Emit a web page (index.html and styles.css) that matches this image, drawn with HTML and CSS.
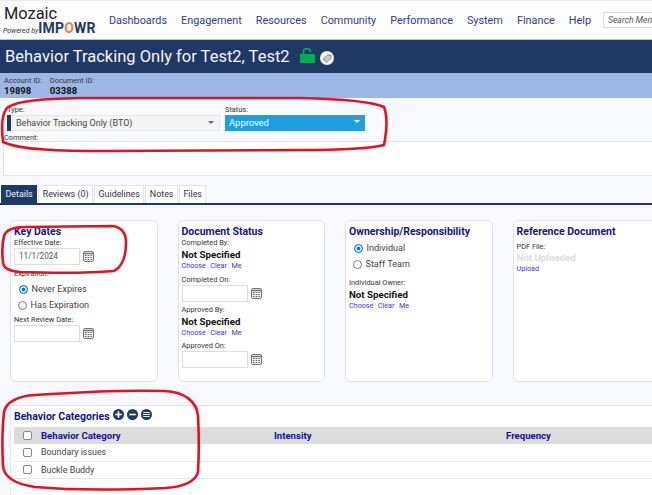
FILE: index.html

```html
<!DOCTYPE html>
<html lang="en">
<head>
  <meta charset="UTF-8">
  <meta name="viewport" content="width=device-width, initial-scale=1.0">
  <title>Behavior Tracking Only</title>
  <link rel="stylesheet" href="styles.css">
</head>
<body>
  <div class="page">
    <!-- Top nav -->
    <div class="topbar">
      <div class="logo">
        <div class="logo-name">Mozaic</div>
        <div class="logo-sub"><span class="powered">Powered by</span><span class="impowr">IMP<span class="impowr-o">O</span>WR</span></div>
      </div>
      <div class="nav">
        <a>Dashboards</a>
        <a>Engagement</a>
        <a>Resources</a>
        <a>Community</a>
        <a>Performance</a>
        <a>System</a>
        <a>Finance</a>
        <a>Help</a>
      </div>
      <div class="search">Search Men</div>
    </div>

    <!-- Title -->
    <div class="titlebar">
      <span class="title">Behavior Tracking Only for Test2, Test2</span>
      <svg class="lock" width="15" height="15" viewBox="0 0 15 15">
        <path d="M3.5 7V3.2a3.2 2.4 0 0 1 7 0V4.2" fill="none" stroke="#00b050" stroke-width="1.7"/>
        <rect x="0" y="6" width="15" height="9" fill="#00b050"/>
      </svg>
      <svg class="tag" width="14" height="14" viewBox="0 0 14 14">
        <circle cx="7" cy="7" r="7" fill="#f4f4f4"/>
        <path d="M3 8.2l4.4-4.2h3.6v3l-4.4 4.2z" fill="#c9ccd2" stroke="#6d7688" stroke-width="0.8"/>
      </svg>
    </div>

    <div class="idbar">
      <div class="id-item"><div class="id-label">Account ID:</div><div class="id-value">19898</div></div>
      <div class="id-item"><div class="id-label">Document ID:</div><div class="id-value">03388</div></div>
    </div>

    <!-- Type / status / comment -->
    <div class="typepanel">
      <div class="type-row">
        <div class="type-col">
          <div class="small-label">Type:</div>
          <div class="type-select"><span class="type-mark"></span><span class="type-box">Behavior Tracking Only (BTO)<i class="caret"></i></span></div>
        </div>
        <div class="status-col">
          <div class="small-label">Status:</div>
          <div class="status-select">Approved<i class="caret caret-white"></i></div>
        </div>
      </div>
      <div class="small-label comment-label">Comment:</div>
      <div class="comment-box"></div>
    </div>

    <!-- Tabs -->
    <div class="tabs">
      <div class="tab active">Details</div>
      <div class="tab">Reviews (0)</div>
      <div class="tab">Guidelines</div>
      <div class="tab">Notes</div>
      <div class="tab">Files</div>
    </div>

    <!-- Cards -->
    <div class="cards">
      <div class="card">
        <div class="card-title">Key Dates</div>
        <div class="small-label">Effective Date:</div>
        <div class="date-row">
          <div class="date-input">11/1/2024</div>
          <svg class="cal" width="11" height="11" viewBox="0 0 11 11"><use href="#cal-icon"/></svg>
        </div>
        <div class="small-label mt-4">Expiration:</div>
        <div class="radio-line first"><span class="radio on"></span>Never Expires</div>
        <div class="radio-line second"><span class="radio"></span>Has Expiration</div>
        <div class="small-label mt-2">Next Review Date:</div>
        <div class="date-row">
          <div class="date-input"></div>
          <svg class="cal" width="11" height="11" viewBox="0 0 11 11"><use href="#cal-icon"/></svg>
        </div>
      </div>

      <div class="card">
        <div class="card-title">Document Status</div>
        <div class="small-label">Completed By:</div>
        <div class="strong-value">Not Specified</div>
        <div class="links"><a>Choose</a><a>Clear</a><a>Me</a></div>
        <div class="small-label mt-4">Completed On:</div>
        <div class="date-row">
          <div class="date-input"></div>
          <svg class="cal" width="11" height="11" viewBox="0 0 11 11"><use href="#cal-icon"/></svg>
        </div>
        <div class="small-label mt-3">Approved By:</div>
        <div class="strong-value">Not Specified</div>
        <div class="links"><a>Choose</a><a>Clear</a><a>Me</a></div>
        <div class="small-label mt-3">Approved On:</div>
        <div class="date-row">
          <div class="date-input"></div>
          <svg class="cal" width="11" height="11" viewBox="0 0 11 11"><use href="#cal-icon"/></svg>
        </div>
      </div>

      <div class="card">
        <div class="card-title">Ownership/Responsibility</div>
        <div class="radio-line first mt-2"><span class="radio on"></span>Individual</div>
        <div class="radio-line second"><span class="radio"></span>Staff Team</div>
        <div class="small-label mt-6">Individual Owner:</div>
        <div class="strong-value">Not Specified</div>
        <div class="links"><a>Choose</a><a>Clear</a><a>Me</a></div>
      </div>

      <div class="card card-last">
        <div class="card-title">Reference Document</div>
        <div class="small-label mt-4">PDF File:</div>
        <div class="strong-value muted">Not Uploaded</div>
        <div class="links"><a>Upload</a></div>
      </div>
    </div>

    <!-- Categories -->
    <div class="categories">
      <div class="cat-head">
        <span class="cat-title">Behavior Categories</span>
        <svg width="11" height="11" viewBox="0 0 12 12"><circle cx="6" cy="6" r="6" fill="#1f3864"/><path d="M6 2.5v7M2.5 6h7" stroke="#fff" stroke-width="1.8"/></svg>
        <svg width="11" height="11" viewBox="0 0 12 12"><circle cx="6" cy="6" r="6" fill="#1f3864"/><path d="M2.5 6h7" stroke="#fff" stroke-width="1.8"/></svg>
        <svg width="11" height="11" viewBox="0 0 12 12"><circle cx="6" cy="6" r="6" fill="#1f3864"/><path d="M2.5 3.8h7M2 6h8M2.5 8.2h7" stroke="#fff" stroke-width="1"/></svg>
      </div>
      <div class="cat-row cat-header">
        <div class="col-name"><span class="check"></span><span>Behavior Category</span></div>
        <div class="col-intensity">Intensity</div>
        <div class="col-frequency">Frequency</div>
      </div>
      <div class="cat-row"><div class="col-name"><span class="check"></span>Boundary issues</div></div>
      <div class="cat-row"><div class="col-name"><span class="check"></span>Buckle Buddy</div></div>
    </div>
  </div>

  <!-- Calendar icon, reused -->
  <svg class="defs" width="0" height="0">
    <symbol id="cal-icon" viewBox="0 0 11 11">
      <rect x="0.5" y="0.5" width="10" height="10" rx="1.5" fill="#eee" stroke="#777"/>
      <path d="M0.5 2.5h10" stroke="#777" stroke-width="1.4"/>
      <path d="M2 4.5h1.5M4.7 4.5h1.5M7.4 4.5h1.5M2 6.5h1.5M4.7 6.5h1.5M7.4 6.5h1.5M2 8.5h1.5M4.7 8.5h1.5M7.4 8.5h1.5" stroke="#666" stroke-width="1"/>
    </symbol>
  </svg>

  <!-- Hand-drawn red rings on top of the screenshot -->
  <svg class="rings" width="652" height="495" viewBox="0 0 652 495">
    <path d="M3 142C1 125 2 112 8 107C20 100 45 99 80 98L300 98C340 99 372 101 384 107C387 115 387 130 384 145C372 148 340 150 300 150L110 151C60 151 20 150 3 142Z"/>
    <path d="M4 236C6 230 12 227 25 227L112 226C122 227 126 233 126 243C126 256 122 267 114 271C90 273 50 273 20 272C8 271 3 267 3 262C2 254 2 244 4 236Z"/>
    <path d="M4 412C6 402 18 396 35 395C80 392 130 390 165 391C185 392 197 402 198 416C199 435 199 455 198 472C195 483 180 487 165 488C120 490 70 490 35 487C15 484 4 477 3 466C2 448 2 430 4 412Z"/>
  </svg>
</body>
</html>
```

FILE: styles.css

```css
* {
  box-sizing: border-box;
}

html, body {
  margin: 0;
  padding: 0;
  height: 495px;
  overflow: hidden;
}

body {
  font-family: Roboto, "Liberation Sans", sans-serif;
  color: #333;
  background: #f8f9fe;
}

.page {
  width: 652px;
  height: 495px;
  overflow: hidden;
}

/* top nav */
.topbar {
  height: 40px;
  background: #fdfdfe;
  border-top: 1px solid #ececec;
  border-bottom: 1px solid #b9c2d2;
  display: flex;
  align-items: center;
  padding-left: 3px;
  white-space: nowrap;
}

.logo {
  width: 106px;
  flex: none;
}

.logo-name {
  font-size: 16.4px;
  line-height: 15px;
  padding-left: 1px;
  margin-top: 1px;
  color: #222;
}

.logo-sub {
  display: flex;
  align-items: baseline;
  line-height: 14px;
  height: 14px;
}

.powered {
  font-size: 7px;
  font-style: italic;
  color: #333;
}

.impowr {
  font-size: 14px;
  font-weight: 700;
  color: #1f3864;
  letter-spacing: 0.2px;
}

.impowr-o {
  color: #ef7d4f;
}

.nav {
  display: flex;
  gap: 14px;
  font-size: 10.85px;
  color: #2f3c8c;
  width: 494px;
  flex: none;
}

.search {
  width: 52px;
  height: 16px;
  flex: none;
  border: 1px solid #ddd;
  border-right: 0;
  background: #fff;
  font-size: 8.6px;
  font-style: italic;
  line-height: 15px;
  padding-left: 4px;
  color: #555;
  overflow: hidden;
}

/* title */
.titlebar {
  height: 33px;
  background: #1f3864;
  display: flex;
  align-items: center;
  padding-left: 5px;
  white-space: nowrap;
}

.title {
  font-size: 16.5px;
  color: #f4f6fa;
  width: 295px;
  flex: none;
}

.lock {
  margin-top: -3px;
  margin-right: 5px;
}

.tag {
  margin-top: 3px;
}

.idbar {
  height: 25px;
  background: #9db8e6;
  display: flex;
  gap: 8px;
  padding: 3px 0 0 4px;
}

.id-label {
  font-size: 7.4px;
  line-height: 9px;
  color: #333;
}

.id-value {
  font-size: 9.5px;
  line-height: 11px;
  font-weight: 700;
  color: #111;
}

/* type panel */
.typepanel {
  height: 87px;
  padding: 7px 0 0 3px;
}

.small-label {
  font-size: 7.4px;
  line-height: 10px;
  color: #333;
}

.type-row {
  display: flex;
  height: 26px;
}

.type-col {
  width: 222px;
  padding-left: 4px;
}

.type-select {
  display: flex;
  height: 16px;
}

.type-mark {
  width: 4px;
  background: #1f3864;
  margin-right: 1px;
}

.type-box {
  width: 208px;
  background: #f5f5f5;
  border: 1px solid #e6e6e6;
  font-size: 9px;
  line-height: 14px;
  padding-left: 3px;
  color: #444;
  position: relative;
}

.caret {
  position: absolute;
  right: 5px;
  top: 5px;
  border-left: 3px solid transparent;
  border-right: 3px solid transparent;
  border-top: 3px solid #666;
}

.caret-white {
  border-top-color: #fff;
}

.status-select {
  width: 140px;
  height: 16px;
  background: #1f9fdb;
  color: #fff;
  font-size: 9.4px;
  line-height: 16px;
  padding-left: 4px;
  position: relative;
}

.comment-label {
  margin-top: 2px;
  padding-left: 1px;
  height: 9px;
  line-height: 9px;
}

.comment-box {
  height: 35px;
  background: #fff;
  border: 1px solid #e2e2e8;
  border-right: 0;
  margin-top: -1px;
}

/* tabs */
.tabs {
  display: flex;
  height: 20px;
  padding-left: 1px;
  gap: 1px;
  border-bottom: 2px solid #1f3864;
}

.tab {
  font-size: 8.9px;
  line-height: 17px;
  padding: 0 3.5px;
  background: #fff;
  border: 1px solid #e4e4ea;
  border-bottom: 0;
  color: #333;
}

.tab.active {
  background: #1f3864;
  border-color: #1f3864;
  color: #f2f4f8;
}

/* cards */
.cards {
  display: flex;
  gap: 20px;
  padding: 15px 0 0 10px;
  height: 200px;
}

.card {
  width: 147.5px;
  height: 162px;
  flex: none;
  background: #fff;
  border: 1px solid #dfe2ee;
  border-radius: 6px;
  padding: 5px 3px 0;
}

.card-last {
  width: 160px;
}

.card-title {
  font-size: 10.5px;
  line-height: 12px;
  font-weight: 700;
  color: #14148c;
}

.date-row {
  display: flex;
  align-items: center;
  gap: 3px;
}

.date-input {
  width: 66px;
  height: 17px;
  border: 1px solid #ddd;
  background: #fff;
  font-size: 8.2px;
  line-height: 15px;
  padding-left: 4px;
  color: #555;
}

.cal {
  flex: none;
}

.radio-line {
  display: flex;
  align-items: center;
  gap: 4px;
  font-size: 9.1px;
  line-height: 16px;
  color: #444;
}

.radio-line.first {
  padding-left: 4.5px;
  margin-top: 2px;
}

.radio-line.second {
  padding-left: 3.5px;
}

.radio {
  width: 9px;
  height: 9px;
  border-radius: 50%;
  border: 1px solid #777;
  background: #fff;
  flex: none;
}

.radio.on {
  border: 1px solid #0a75e8;
  background: #0a75e8;
  box-shadow: inset 0 0 0 1.5px #fff;
}

.strong-value {
  font-size: 9.7px;
  line-height: 12px;
  font-weight: 700;
  color: #111;
  margin-top: 1px;
}

.strong-value.muted {
  color: #dcdcdc;
  margin-top: 0;
}

.links {
  display: flex;
  gap: 4.5px;
  font-size: 7.2px;
  line-height: 10px;
  color: #3a35e0;
}

.mt-2 { margin-top: 2px; }
.mt-3 { margin-top: 3px; }
.mt-4 { margin-top: 4px; }
.mt-6 { margin-top: 6px; }

/* categories */
.categories {
  margin-left: 10px;
  height: 90px;
  background: #fff;
  border-top: 1px solid #dfe5ef;
  border-left: 1px solid #e6e8f0;
  padding-left: 3px;
}

.cat-head {
  display: flex;
  align-items: center;
  gap: 3px;
  height: 21px;
}

.cat-title {
  font-size: 10.5px;
  font-weight: 700;
  color: #14148c;
}

.cat-head svg {
  margin-top: -4px;
}

.cat-row {
  display: flex;
  height: 17.5px;
  align-items: center;
  border-bottom: 1px solid #e6e6e6;
  font-size: 8.9px;
  color: #444;
}

.cat-header {
  background: #dcdcdc;
  border-bottom: 0;
  height: 17px;
  font-size: 9.6px;
  font-weight: 700;
  color: #14148c;
}

.col-name {
  display: flex;
  align-items: center;
  width: 260px;
  padding-left: 9px;
  flex: none;
}

.col-intensity {
  width: 232px;
  flex: none;
}

.check {
  width: 9px;
  height: 9px;
  border: 1px solid #888;
  border-radius: 2px;
  background: #fff;
  margin-right: 9px;
  flex: none;
}

.defs {
  position: absolute;
}

/* the red marker rings lie over the page */
.rings {
  position: absolute;
  left: 0;
  top: 0;
  pointer-events: none;
}

.rings path {
  fill: none;
  stroke: #e8101f;
  stroke-width: 2.6;
}
```
